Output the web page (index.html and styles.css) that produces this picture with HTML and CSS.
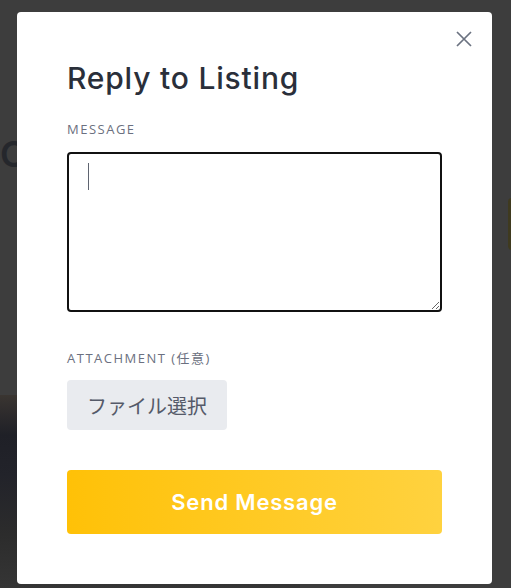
FILE: index.html
```html
<!DOCTYPE html>
<html lang="ja">
<head>
  <meta charset="UTF-8">
  <meta name="viewport" content="width=device-width, initial-scale=1.0">
  <title>Reply to Listing</title>
  <link rel="stylesheet" href="styles.css">
</head>
<body>

  <!-- 背景のページ（オーバーレイで暗くなっている） -->
  <div class="page">
    <div class="hero">
      <h1>C</h1>
      <span class="cta"></span>
    </div>
    <div class="photo"></div>
  </div>

  <!-- モーダル -->
  <div class="modal">
    <button class="close-btn" type="button" aria-label="閉じる">
      <svg width="16" height="16" viewBox="0 0 16 16">
        <path d="M1 1 L15 15 M15 1 L1 15" stroke="#6b7280" stroke-width="1.7" fill="none"/>
      </svg>
    </button>

    <h2 class="modal-title">Reply to Listing</h2>

    <form class="reply-form">
      <label class="field-label" for="message">Message</label>
      <div class="message-wrap">
        <textarea id="message" class="message-box" autofocus></textarea>
        <span class="caret"></span>
      </div>

      <label class="field-label attach-label">Attachment (任意)</label>
      <label class="file-btn">
        ファイル選択
        <input type="file" class="file-input">
      </label>

      <button type="submit" class="send-btn">Send Message</button>
    </form>
  </div>

</body>
</html>
```

FILE: styles.css
```css
/* === ページ全体 === */
html, body {
  margin: 0;
  height: 100%;
  overflow: hidden;
}
body {
  background: #3d3d3d;
  font-family: "Open Sans", "Noto Sans CJK JP", sans-serif;
}

/* === 背景ページ（暗い部分） === */
.page {
  width: 608px;
}
.hero {
  display: flex;
  justify-content: space-between;
  align-items: flex-start;
  padding-top: 134px;
}
.hero h1 {
  margin: 0;
  font-family: "Inter", sans-serif;
  font-size: 36px;
  line-height: 40px;
  font-weight: 600;
  color: #25272c;
}
.cta {
  display: block;
  width: 100px;
  height: 52px;
  margin-top: 64px;
  background: #3f3a1f;
  border-radius: 4px;
}
.photo {
  width: 300px;
  height: 200px;
  margin-top: 145px;
  background: linear-gradient(180deg, #3a3531 0%, #1f2027 20%, #22232a 40%, #2c2c2c 70%, #363636 100%);
}

/* === モーダル === */
.modal {
  position: fixed;
  top: 12px;
  left: 17px;
  width: 475px;
  height: 572px;
  box-sizing: border-box;
  padding: 50px;
  background: #fff;
  border-radius: 4px;
}
.close-btn {
  position: absolute;
  top: 19px;
  right: 20px;
  padding: 0;
  border: none;
  background: transparent;
  cursor: pointer;
  line-height: 0;
}
.modal-title {
  margin: 0 0 25px;
  font-family: "Inter", sans-serif;
  font-size: 30px;
  line-height: 33px;
  font-weight: 500;
  letter-spacing: 0.8px;
  color: #2a2f3a;
}

.reply-form {
  display: flex;
  flex-direction: column;
  align-items: flex-start;
}
.field-label {
  font-size: 13px;
  line-height: 18px;
  letter-spacing: 1.5px;
  text-transform: uppercase;
  color: #6b7080;
  margin-bottom: 14px;
}
.attach-label {
  margin-top: 37px;
  margin-bottom: 13px;
}

.message-wrap {
  position: relative;
  width: 100%;
}
.message-box {
  display: block;
  width: 100%;
  height: 160px;
  box-sizing: border-box;
  padding: 10px 18px;
  border: 2px solid #111;
  border-radius: 4px;
  outline: none;
  font-family: inherit;
  font-size: 16px;
  line-height: 27px;
  caret-color: transparent;
  resize: vertical;
}
.caret {                                  /* 入力カーソル（フォーカス中） */
  position: absolute;
  top: 11px;
  left: 21px;
  width: 1px;
  height: 27px;
  background: #5f6470;
}

.file-btn {
  display: flex;
  align-items: center;
  justify-content: center;
  width: 160px;
  height: 50px;
  background: #e9ebef;
  border-radius: 4px;
  font-family: "Noto Sans CJK JP", sans-serif;
  font-size: 20px;
  color: #555a69;
  cursor: pointer;
}
.file-input {
  display: none;
}

.send-btn {
  width: 100%;
  height: 64px;
  margin-top: 40px;
  border: none;
  border-radius: 4px;
  background: linear-gradient(90deg, #ffc107, #ffd23f);
  color: #fff;
  font-family: "Inter", sans-serif;
  font-size: 22px;
  font-weight: 600;
  letter-spacing: 0.8px;
  cursor: pointer;
}
```
